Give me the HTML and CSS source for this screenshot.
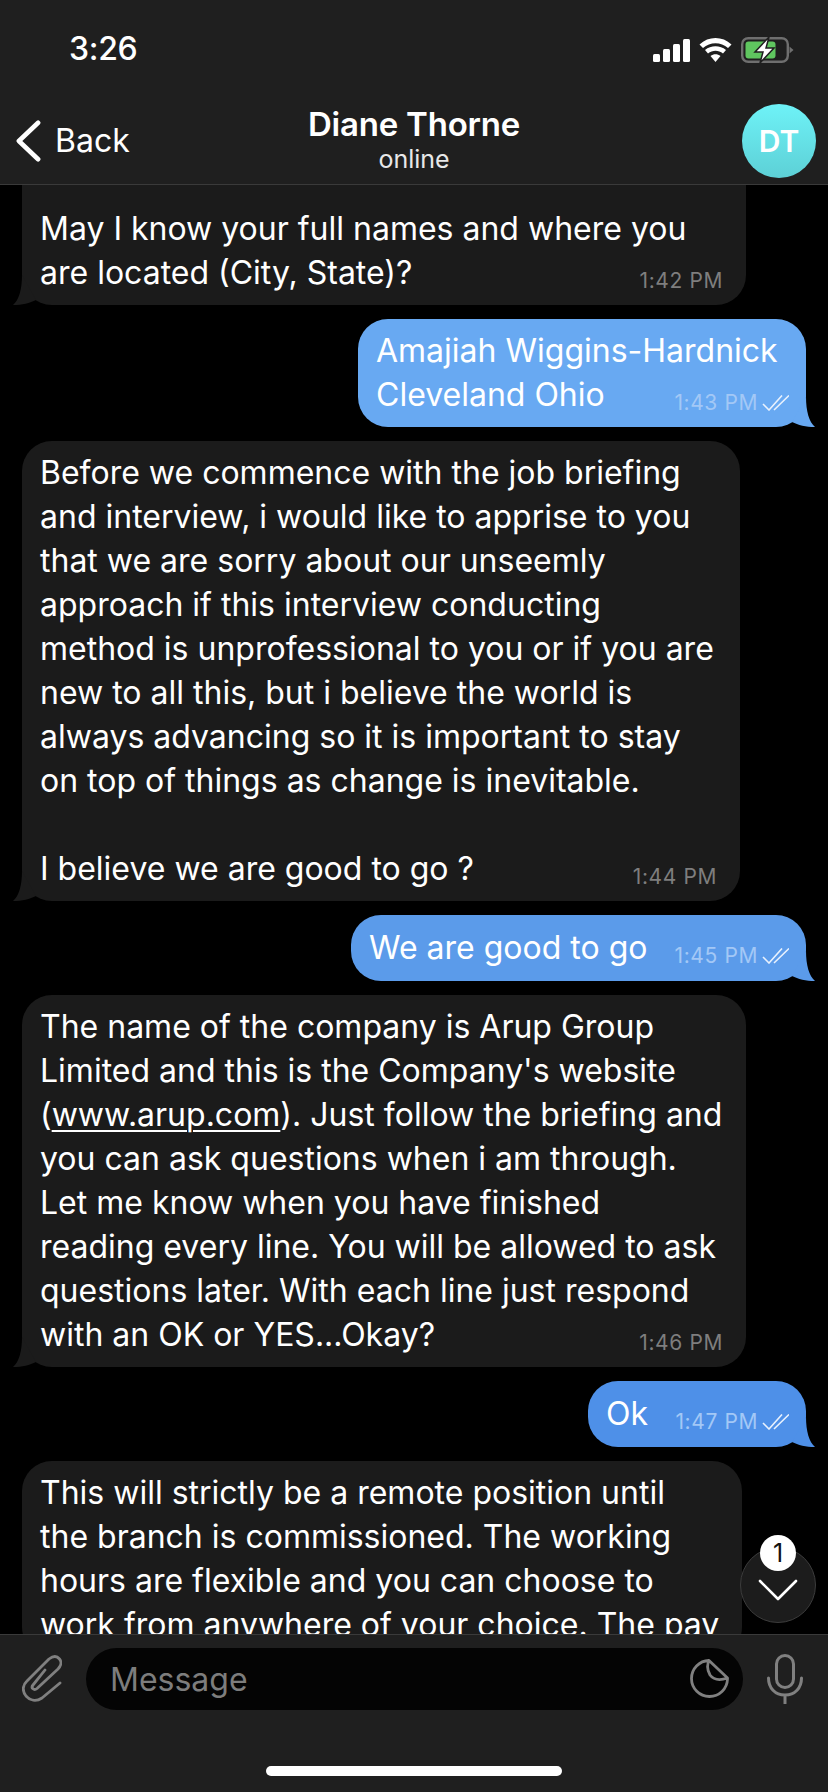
FILE: index.html
```html
<!DOCTYPE html>
<html lang="en">
<head>
<meta charset="utf-8">
<title>Diane Thorne</title>
<link rel="stylesheet" href="styles.css">
</head>
<body>
<div class="app">
  <header class="top">
    <div class="status">
      <span class="clock">3:26</span>
      <div class="status-icons">
        <svg class="sig" viewBox="0 0 37 23"><rect x="0" y="15" width="7" height="8" rx="1.5"/><rect x="10" y="10" width="7" height="13" rx="1.5"/><rect x="20" y="5" width="7" height="18" rx="1.5"/><rect x="30" y="0" width="7" height="23" rx="1.5"/></svg>
        <svg class="wifi" viewBox="0 0 32 24"><path d="M16 24l-5-6c3-2.400 7-2.400 10 0z"/><path d="M8.500 15.500L5.500 12c6-5 15-5 21 0l-3 3.500c-4.500-3.600-10.500-3.600-15 0z"/><path d="M3.500 10L0 6.500c9-8.600 23-8.600 32 0L28.500 10C21.500 3.500 10.500 3.500 3.500 10z"/></svg>
        <svg class="batt" viewBox="0 0 53 26"><rect x="1.200" y="1.200" width="45.600" height="23.600" rx="6" fill="none" stroke="#6f6f6f" stroke-width="2.400"/><rect x="4.500" y="4.500" width="30" height="17" rx="3" fill="#5fc65f"/><path d="M48.500 9.500l4 3.500-4 3.500z" fill="#6f6f6f"/><path d="M28 0L14 15h8l-3 11 14-15h-8z" fill="#fff" stroke="#1f1f1f" stroke-width="1.500"/></svg>
      </div>
    </div>
    <nav class="nav">
      <div class="back">
        <svg class="chev" viewBox="0 0 26 42"><path d="M23 2L3 21l20 19" fill="none" stroke="#fff" stroke-width="4.800" stroke-linecap="round" stroke-linejoin="round"/></svg>
        <span>Back</span>
      </div>
      <div class="title">
        <div class="name">Diane Thorne</div>
        <div class="presence">online</div>
      </div>
      <div class="avatar">DT</div>
    </nav>
  </header>

  <main class="chat">
    <div class="bubble in w1 first">
      May I know your full names and where you
      <div class="last"><span>are located (City, State)?</span><span class="time">1:42 PM</span></div>
      <svg class="tail" viewBox="0 0 24 30"><path d="M9 0C9 14 6 25 0 30c9 0 17-2 23-5z"/></svg>
    </div>

    <div class="bubble out w2">
      Amajiah Wiggins-Hardnick
      <div class="last"><span>Cleveland Ohio</span><span class="meta"><span class="time">1:43 PM</span><svg class="ticks" viewBox="0 0 27 16"><path d="M1 9l6 6L20 .5M12 15L27 .5" fill="none" stroke="#e8f1fd" stroke-width="1.600"/></svg></span></div>
      <svg class="tail" viewBox="0 0 24 30"><path d="M15 0c0 14 3 25 9 30-9 0-17-2-23-5z"/></svg>
    </div>

    <div class="bubble in w3">
      Before we commence with the job briefing<br>
      and interview, i would like to apprise to you<br>
      that we are sorry about our unseemly<br>
      approach if this interview conducting<br>
      method is unprofessional to you or if you are<br>
      new to all this, but i believe the world is<br>
      always advancing so it is important to stay<br>
      on top of things as change is inevitable.<br>
      <br>
      <div class="last"><span>I believe we are good to go ?</span><span class="time">1:44 PM</span></div>
      <svg class="tail" viewBox="0 0 24 30"><path d="M9 0C9 14 6 25 0 30c9 0 17-2 23-5z"/></svg>
    </div>

    <div class="bubble out w4 single">
      <div class="last"><span>We are good to go</span><span class="meta"><span class="time">1:45 PM</span><svg class="ticks" viewBox="0 0 27 16"><path d="M1 9l6 6L20 .5M12 15L27 .5" fill="none" stroke="#e8f1fd" stroke-width="1.600"/></svg></span></div>
      <svg class="tail" viewBox="0 0 24 30"><path d="M15 0c0 14 3 25 9 30-9 0-17-2-23-5z"/></svg>
    </div>

    <div class="bubble in w5">
      The name of the company is Arup Group<br>
      Limited and this is the Company's website<br>
      (<span class="link">www.arup.com</span>). Just follow the briefing and<br>
      you can ask questions when i am through.<br>
      Let me know when you have finished<br>
      reading every line. You will be allowed to ask<br>
      questions later. With each line just respond
      <div class="last"><span>with an OK or YES...Okay?</span><span class="time">1:46 PM</span></div>
      <svg class="tail" viewBox="0 0 24 30"><path d="M9 0C9 14 6 25 0 30c9 0 17-2 23-5z"/></svg>
    </div>

    <div class="bubble out w6 single">
      <div class="last"><span>Ok</span><span class="meta"><span class="time">1:47 PM</span><svg class="ticks" viewBox="0 0 27 16"><path d="M1 9l6 6L20 .5M12 15L27 .5" fill="none" stroke="#e8f1fd" stroke-width="1.600"/></svg></span></div>
      <svg class="tail" viewBox="0 0 24 30"><path d="M15 0c0 14 3 25 9 30-9 0-17-2-23-5z"/></svg>
    </div>

    <div class="bubble in w7">
      This will strictly be a remote position until<br>
      the branch is commissioned. The working<br>
      hours are flexible and you can choose to<br>
      work from anywhere of your choice. The pay
    </div>
  </main>

  <div class="jump">
    <span class="badge">1</span>
    <svg class="down" viewBox="0 0 40 24"><path d="M2 3l18 18L38 3" fill="none" stroke="#fff" stroke-width="2.600" stroke-linecap="round" stroke-linejoin="round"/></svg>
  </div>

  <footer class="bottom">
    <div class="composer">
      <svg class="clip" viewBox="0 0 40 48"><path d="M38 28L20 43C14 47 8 45.500 4 41C0 36 .5 30 5 26L27 4C31 1 35 1 37.500 4C40 7 39 11 36 14L15 33.500C12 36 8.500 33 11 30L23 15" fill="none" stroke="#808080" stroke-width="2.800" stroke-linecap="round" stroke-linejoin="round"/></svg>
      <div class="field">
        <span class="placeholder">Message</span>
        <svg class="sticker" viewBox="0 0 40 40"><path d="M20 1.500A18 18 0 1 0 38.500 20L38.500 19L20 1.500C18 6 18 11 21 16C24 20 30 22 38.500 19" fill="none" stroke="#808080" stroke-width="2.800" stroke-linejoin="round"/></svg>
      </div>
      <svg class="mic" viewBox="0 0 36 50"><rect x="9.500" y="1.500" width="17" height="32" rx="8.500" fill="none" stroke="#808080" stroke-width="3"/><path d="M1.500 24C1.500 34 8 41 18 41S34.500 34 34.500 24M18 41V49.500" fill="none" stroke="#808080" stroke-width="3" stroke-linecap="round"/></svg>
    </div>
    <div class="home"></div>
  </footer>
</div>
</body>
</html>
```

FILE: styles.css
```css
* { box-sizing: border-box; }
html, body { margin: 0; padding: 0; background: #000; }
body { font-family: Inter, "Liberation Sans", sans-serif; color: #fff; }

.app {
  position: relative;
  width: 828px;
  height: 1792px;
  display: flex;
  flex-direction: column;
  overflow: hidden;
  background: #000;
}

/* header */
.top {
  flex: none;
  height: 185px;
  background: #1f1f1f;
  border-bottom: 1px solid #3a3a3a;
}
.status {
  height: 100px;
  padding: 30px 34px 0 69px;
  display: flex;
  justify-content: space-between;
  align-items: flex-start;
}
.clock { font-size: 32px; line-height: 38px; font-weight: 500; letter-spacing: -0.3px; }
.status-icons { display: flex; align-items: center; gap: 9px; padding-top: 7px; }
.sig { width: 37px; height: 23px; fill: #fff; }
.wifi { width: 33px; height: 24px; fill: #fff; }
.batt { width: 53px; height: 26px; }

.nav {
  display: grid;
  grid-template-columns: 1fr auto 1fr;
  align-items: start;
  padding: 4px 12px 0 12px;
}
.back { display: flex; align-items: center; gap: 14px; font-size: 32px; padding: 16px 0 0 4px; line-height: 42px; }
.chev { width: 25px; height: 42px; }
.title { text-align: center; margin-top: 2px; }
.name { font-size: 33px; line-height: 36px; font-weight: 600; letter-spacing: -0.2px; }
.presence { font-size: 25px; line-height: 28px; margin-top: 3px; color: #e8e8e8; }
.avatar {
  justify-self: end;
  width: 74px;
  height: 74px;
  border-radius: 50%;
  display: flex;
  align-items: center;
  justify-content: center;
  font-size: 30px;
  font-weight: 600;
  background: linear-gradient(#6ef2f7, #5dd0d6);
}

/* messages */
.chat {
  flex: 1;
  min-height: 0;
  overflow: hidden;
  display: flex;
  flex-direction: column;
  gap: 14px;
}
.bubble {
  position: relative;
  flex: none;
  padding: 10px 23px 10px 18px;
  border-radius: 30px;
  font-size: 32px;
  line-height: 44px;
  white-space: nowrap;
}
.bubble.in { background: #1b1b1b; margin-left: 22px; align-self: flex-start; }
.bubble.out { margin-right: 22px; align-self: flex-end; padding-right: 17px; }
.first { margin-top: -40px; padding-top: 62px; }
.single { padding-top: 11px; padding-bottom: 11px; }
.w1 { width: 724px; }
.w2 { width: 448px; background: #68a9f2; fill: #68a9f2; }
.w3 { width: 718px; }
.w4 { width: 455px; background: #5b9bea; fill: #5b9bea; }
.w5 { width: 724px; }
.w6 { width: 218px; background: #4e90e8; fill: #4e90e8; }
.w7 { width: 720px; }

.last { display: flex; justify-content: space-between; align-items: flex-end; }
.time { font-size: 21px; line-height: 30px; letter-spacing: 0.6px; color: #7e7e7e; margin-bottom: -1px; }
.out .time { color: #a3c8f6; margin-bottom: 0; }
.meta { display: flex; align-items: center; gap: 4px; margin-bottom: -1px; }
.ticks { width: 27px; height: 16px; }
.link { text-decoration: underline; text-decoration-thickness: 2px; text-underline-offset: 4px; }

.tail { position: absolute; width: 24px; height: 30px; bottom: 0; }
.in .tail { left: -9px; fill: #1b1b1b; }
.out .tail { right: -9px; }

/* scroll to bottom */
.jump {
  position: absolute;
  left: 740px;
  top: 1547px;
  width: 76px;
  height: 76px;
  border-radius: 50%;
  background: #1c1c1c;
  border: 1px solid #3c3c3c;
  display: flex;
  align-items: center;
  justify-content: center;
}
.badge {
  position: absolute;
  left: 19px;
  top: -13px;
  width: 36px;
  height: 36px;
  border-radius: 50%;
  background: #fff;
  color: #111;
  font-size: 25px;
  line-height: 36px;
  text-align: center;
}
.down { width: 40px; height: 24px; margin-top: 10px; }

/* composer */
.bottom {
  flex: none;
  height: 158px;
  background: #1f1f1f;
  border-top: 1px solid #3a3a3a;
  display: flex;
  flex-direction: column;
  align-items: center;
}
.composer {
  width: 100%;
  padding: 13px 25px 0 22px;
  display: flex;
  align-items: center;
  gap: 24px;
}
.clip { width: 40px; height: 48px; flex: none; }
.field {
  flex: 1;
  height: 62px;
  border-radius: 31px;
  background: #040404;
  display: flex;
  align-items: center;
  justify-content: space-between;
  padding: 0 14px 0 24px;
}
.placeholder { font-size: 32px; color: #7d7d7d; }
.sticker { width: 40px; height: 40px; }
.mic { width: 36px; height: 50px; flex: none; }
.home {
  width: 296px;
  height: 10px;
  border-radius: 5px;
  background: #fff;
  margin-top: 56px;
}
```
